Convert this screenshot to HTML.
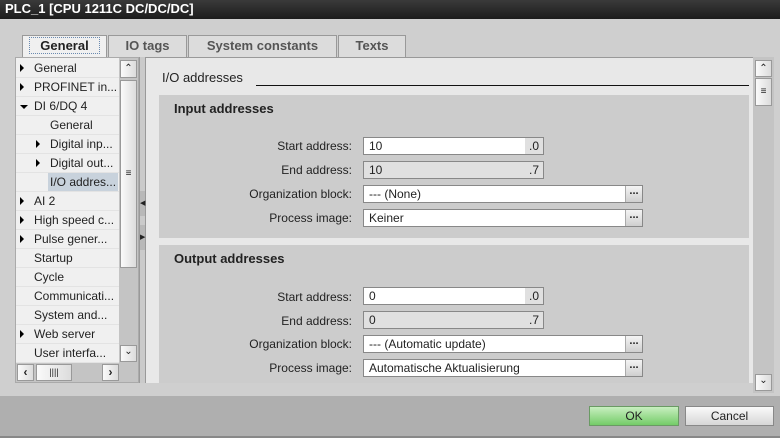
<!DOCTYPE html>
<html><head><style>
*{box-sizing:border-box;margin:0;padding:0}
body{width:780px;height:438px;overflow:hidden;background:#cfcfcf;font-family:"Liberation Sans",sans-serif;font-size:12px;color:#222;position:relative}
.a{position:absolute}
.title{left:0;top:0;width:780px;height:19px;background:linear-gradient(#3a3a3a,#1c1c1c);color:#fff;font-weight:bold;font-size:13px;padding:1px 0 0 5px}
.tab{top:35px;height:22px;background:#dcdcdc;border:1px solid #999;border-bottom:none;color:#555;font-weight:bold;font-size:13px;text-align:center;line-height:20px}
.row{left:16px;width:103px;height:19px;border-bottom:1px solid #e3e3e3;line-height:18px;white-space:nowrap;font-size:12px;padding-left:4px}
.tri{display:inline-block;width:0;height:0;border-left:4px solid #000;border-top:4px solid transparent;border-bottom:4px solid transparent;margin-right:10px;vertical-align:0}
.trd{display:inline-block;width:0;height:0;border-top:4px solid #000;border-left:4px solid transparent;border-right:4px solid transparent;margin-right:6px;vertical-align:1px}
.sb{background:linear-gradient(90deg,#fafafa,#dcdcdc);border:1px solid #999}
.lbl{width:190px;text-align:right;font-size:12px}
.in{background:#fff;border:1px solid #888;height:18px;padding-left:5px;line-height:16px;font-size:12px}
.bt{background:linear-gradient(#f4f4f4,#cfcfcf);border-left:1px solid #aaa;width:17px;height:16px;font-weight:bold;text-align:center;line-height:10px;font-size:11px}
</style></head><body>
<div class="a title">PLC_1 [CPU 1211C DC/DC/DC]</div>
<div class="a" style="left:0;top:19px;width:780px;height:377px;background:#cfcfcf"></div>
<div class="a" style="left:0;top:396px;width:780px;height:42px;background:#afafaf;border-bottom:2px solid #888"></div>

<div class="a tab" style="left:22px;width:85px;background:#f0f0f0;color:#222"><span style="border:1px dotted #6a8ab0;padding:0 10px">General</span></div>
<div class="a tab" style="left:108px;width:79px">IO tags</div>
<div class="a tab" style="left:188px;width:149px">System constants</div>
<div class="a tab" style="left:338px;width:68px">Texts</div>

<div class="a" style="left:15px;top:57px;width:124px;height:326px;background:#f0f0f0;border:1px solid #aaa"></div>
<div class="a row" style="top:59px"><span class="tri"></span>General</div>
<div class="a row" style="top:78px"><span class="tri"></span>PROFINET in...</div>
<div class="a row" style="top:97px"><span class="trd"></span>DI 6/DQ 4</div>
<div class="a row" style="top:116px;padding-left:34px">General</div>
<div class="a row" style="top:135px;padding-left:20px"><span class="tri"></span>Digital inp...</div>
<div class="a row" style="top:154px;padding-left:20px"><span class="tri"></span>Digital out...</div>
<div class="a row" style="top:173px;padding-left:32px"><span style="background:#c8d2dc;padding:0 2px 2px 2px;display:inline-block;height:18px">I/O addres...</span></div>
<div class="a row" style="top:192px"><span class="tri"></span>AI 2</div>
<div class="a row" style="top:211px"><span class="tri"></span>High speed c...</div>
<div class="a row" style="top:230px"><span class="tri"></span>Pulse gener...</div>
<div class="a row" style="top:249px;padding-left:18px">Startup</div>
<div class="a row" style="top:268px;padding-left:18px">Cycle</div>
<div class="a row" style="top:287px;padding-left:18px">Communicati...</div>
<div class="a row" style="top:306px;padding-left:18px">System and...</div>
<div class="a row" style="top:325px"><span class="tri"></span>Web server</div>
<div class="a row" style="top:344px;padding-left:18px">User interfa...</div>
<div class="a" style="left:119px;top:58px;width:19px;height:305px;background:#c4c4c4"></div>
<div class="a sb" style="left:120px;top:60px;width:17px;height:18px;text-align:center;font-size:10px;line-height:16px">&#8963;</div>
<div class="a sb" style="left:120px;top:80px;width:17px;height:188px;text-align:center;line-height:186px;font-size:10px">&#8801;</div>
<div class="a sb" style="left:120px;top:345px;width:17px;height:17px;text-align:center;font-size:10px;line-height:12px">&#8964;</div>
<div class="a" style="left:16px;top:363px;width:122px;height:19px;background:#c4c4c4"></div>
<div class="a sb" style="left:17px;top:364px;width:17px;height:17px;text-align:center;line-height:15px;font-weight:bold">&lsaquo;</div>
<div class="a sb" style="left:36px;top:364px;width:36px;height:17px;text-align:center;line-height:15px;font-size:9px">||||</div>
<div class="a sb" style="left:102px;top:364px;width:17px;height:17px;text-align:center;line-height:15px;font-weight:bold">&rsaquo;</div>

<div class="a" style="left:139px;top:57px;width:7px;height:326px;background:#cacaca;border-left:1px solid #999;border-right:1px solid #999"></div>
<div class="a" style="left:140px;top:191px;width:5px;height:25px;background:#b8b8b8;font-size:7px;line-height:25px">&#9664;</div>
<div class="a" style="left:140px;top:225px;width:5px;height:25px;background:#b8b8b8;font-size:7px;line-height:25px">&#9654;</div>

<div class="a" style="left:146px;top:57px;width:607px;height:326px;background:#e8e8e8;border-top:1px solid #999"></div>
<div class="a" style="left:162px;top:70px;font-size:13px">I/O addresses</div>
<div class="a" style="left:256px;top:85px;width:493px;height:1px;background:#111"></div>
<div class="a" style="left:753px;top:57px;width:21px;height:336px;background:#c4c4c4"></div>
<div class="a sb" style="left:755px;top:60px;width:17px;height:17px;text-align:center;font-size:10px;line-height:15px">&#8963;</div>
<div class="a sb" style="left:755px;top:78px;width:17px;height:28px;text-align:center;line-height:26px;font-size:10px">&#8801;</div>
<div class="a sb" style="left:755px;top:374px;width:17px;height:17px;text-align:center;font-size:10px;line-height:12px">&#8964;</div>

<div class="a" style="left:159px;top:95px;width:590px;height:143px;background:#cccccc"></div>
<div class="a" style="left:174px;top:101px;font-weight:bold;font-size:13px">Input addresses</div>
<div class="a lbl" style="left:162px;top:139px">Start address:</div>
<div class="a in" style="left:363px;top:137px;width:181px">10<span style="position:absolute;right:0;top:0;width:18px;height:16px;background:#e0e0e0;text-align:center">.0</span></div>
<div class="a lbl" style="left:162px;top:163px">End address:</div>
<div class="a in" style="left:363px;top:161px;width:181px;background:#e0e0e0">10<span style="position:absolute;right:4px">.7</span></div>
<div class="a lbl" style="left:162px;top:187px">Organization block:</div>
<div class="a in" style="left:363px;top:185px;width:280px">--- (None)<span class="a bt" style="right:0;top:0">...</span></div>
<div class="a lbl" style="left:162px;top:211px">Process image:</div>
<div class="a in" style="left:363px;top:209px;width:280px">Keiner<span class="a bt" style="right:0;top:0">...</span></div>

<div class="a" style="left:159px;top:245px;width:590px;height:138px;background:#cccccc"></div>
<div class="a" style="left:174px;top:251px;font-weight:bold;font-size:13px">Output addresses</div>
<div class="a lbl" style="left:162px;top:290px">Start address:</div>
<div class="a in" style="left:363px;top:287px;width:181px">0<span style="position:absolute;right:0;top:0;width:18px;height:16px;background:#e0e0e0;text-align:center">.0</span></div>
<div class="a lbl" style="left:162px;top:314px">End address:</div>
<div class="a in" style="left:363px;top:311px;width:181px;background:#e0e0e0">0<span style="position:absolute;right:4px">.7</span></div>
<div class="a lbl" style="left:162px;top:337px">Organization block:</div>
<div class="a in" style="left:363px;top:335px;width:280px">--- (Automatic update)<span class="a bt" style="right:0;top:0">...</span></div>
<div class="a lbl" style="left:162px;top:361px">Process image:</div>
<div class="a in" style="left:363px;top:359px;width:280px">Automatische Aktualisierung<span class="a bt" style="right:0;top:0">...</span></div>

<div class="a" style="left:589px;top:406px;width:90px;height:20px;background:linear-gradient(#c8efc0,#74cc68);border:1px solid #6a9a64;text-align:center;line-height:18px;font-size:12px">OK</div>
<div class="a" style="left:685px;top:406px;width:89px;height:20px;background:linear-gradient(#fafafa,#d6d6d6);border:1px solid #888;text-align:center;line-height:18px;font-size:12px">Cancel</div>
</body></html>
